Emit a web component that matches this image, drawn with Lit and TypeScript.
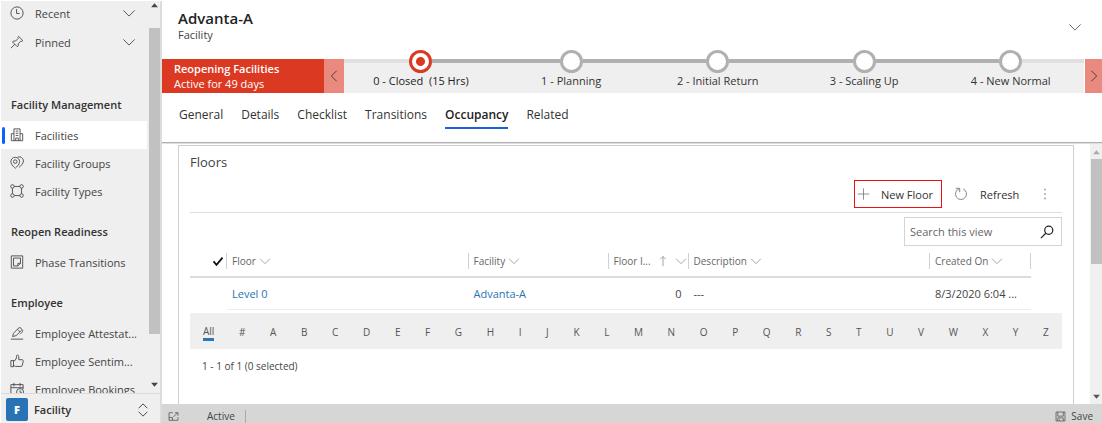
import { LitElement, html, css, svg } from "lit";
import { customElement, property } from "lit/decorators.js";

const glyphs: Record<string, unknown> = {
  recent: svg`<circle cx="8" cy="8" r="7"/><path d="M7.500 3.500v5H11"/>`,
  pin: svg`<path d="M9.800 1.500l4.900 4.900-1.200.9-1.200-.2-2.900 2.900.1 2.300-1.200 1.100L2.900 8l1.100-1.200 2.400.1 2.900-2.900-.3-1.200zM5.500 10.600L1 15"/>`,
  building: svg`<path d="M4.500 14.500V1h7v13.500M4.500 6.500h-3v8h13v-8h-3M6.500 3.500h3M6.500 6h3M6.500 8.500h3M6.500 14.500v-3h3v3"/>`,
  groups: svg`<path d="M6 1.500A4.900 4.900 0 0 0 1 6.400C1 10 6 14 6 14s5-4 5-7.600a4.900 4.900 0 0 0-5-4.900z"/><circle cx="6" cy="6.400" r="2"/><path d="M9 1.200c3.500-1 6.300 1.500 6.300 4.500 0 3.300-3.300 6-4.800 7.200"/>`,
  types: svg`<circle cx="2.800" cy="2.800" r="2"/><circle cx="13.200" cy="2.800" r="2"/><circle cx="2.800" cy="13.200" r="2"/><circle cx="13.200" cy="13.200" r="2"/><path d="M4.800 2.800h6.400M4.800 13.200h6.400M2.800 4.800v6.400M13.200 4.800v6.400"/>`,
  phase: svg`<path d="M1.500 1h13v14h-13zM4 3.500h8v6l-3 3H4zM9 12.500v-3h3"/>`,
  pen: svg`<path d="M1 15h14M3 12l1-3.800L10.300 2c1.200-1 4 1.600 2.900 2.900L7 11zM8.500 3.800l2.900 2.900M14 4.500c1.500 1 .5 2-2.500 5"/>`,
  thumb: svg`<path d="M1 7.500h3v7H1zM4 13l2.200 1.200h6.300c1 0 1.500-.6 1.600-1.300l1-4.700c.2-1-.5-1.700-1.400-1.700H10V3c0-2.300-2.600-2.300-2.600-.5v2L5.500 7.800H4"/>`,
  booking: svg`<path d="M7 14H1V3h14v5M1 6.500h14M4.500 1v4M11.500 1v4M11.500 9.500v2.300h2"/><circle cx="11.500" cy="11.500" r="4"/>`,
  down: svg`<path d="M1.500 5L8 11.500 14.500 5"/>`,
  left: svg`<path d="M11 2L5 8l6 6"/>`,
  right: svg`<path d="M5 2l6 6-6 6"/>`,
  updown: svg`<path d="M3 6l5-5 5 5M3 10l5 5 5-5"/>`,
  plus: svg`<path d="M8 1v14M1 8h14"/>`,
  refresh: svg`<path d="M2 1.500h4.500V6M6 2a6.300 6.300 0 1 0 4.500.2"/>`,
  search: svg`<circle cx="10" cy="6" r="4.600"/><path d="M6.700 9.500L1 15"/>`,
  check: svg`<path d="M2 8.500l4 4.500L14 3.500"/>`,
  arrow: svg`<path d="M8 15V2M4.500 5.500L8 2l3.500 3.500"/>`,
  more: svg`<path class="solid" d="M7.300 2h1.400v1.600H7.300zM7.300 7.200h1.400v1.600H7.300zM7.300 12.400h1.400V14H7.300z"/>`,
  popout: svg`<path d="M7 2.500H1.500v11h13V9M1.500 9.500h5v4M8 8.500l6-6M10 2.500h4.500V7"/>`,
  save: svg`<path d="M1.500 1.500h13v13h-13zM4 1.500v6h8v-6M4 14.500V10h8v4.500M6.500 12v2"/>`,
  triUp: svg`<path class="solid" d="M8 4l6 7H2z"/>`,
  triDown: svg`<path class="solid" d="M8 12l6-7H2z"/>`,
};

@customElement("ui-icon")
class UiIcon extends LitElement {
  @property() name = "";
  static styles = css`
    :host { display: inline-flex; width: 14px; height: 14px; flex: none; }
    svg { width: 100%; height: 100%; fill: none; stroke: currentColor; stroke-width: var(--stroke, 1); }
    .solid { fill: currentColor; stroke: none; }
  `;
  render() {
    return html`<svg viewBox="0 0 16 16" aria-hidden="true">${glyphs[this.name]}</svg>`;
  }
}

@customElement("side-nav")
class SideNav extends LitElement {
  static styles = css`
    :host { display: flex; flex-direction: column; width: 159px; flex: none; background: #efefef; margin: 1px 0 0 1px; border-right: 2px solid #dcdcdc; color: #444; font-size: 11px; }
    .body { flex: 1; min-height: 0; display: flex; }
    .list { flex: 1; min-width: 0; overflow: hidden; }
    .quick { display: grid; gap: 5px; padding-bottom: 24px; }
    button { font: inherit; color: inherit; background: none; border: 0; text-align: left; display: flex; align-items: center; width: 100%; padding: 0 11px 0 9px; height: 24px; }
    button span { flex: 1; padding-left: 11px; }
    h2 { margin: 0; height: 43px; box-sizing: border-box; padding: 19px 0 0 10px; font-size: 11px; line-height: 16px; font-weight: 600; color: #333; }
    a { display: flex; align-items: center; height: 28px; padding: 0 8px 0 9px; color: inherit; text-decoration: none; }
    a span { padding-left: 11px; white-space: nowrap; }
    .on { background: #fff; padding-left: 1px; }
    .on::before { content: ""; width: 3px; height: 17px; border-radius: 2px; background: #0b62ff; margin-right: 5px; }
    .bar { width: 11px; margin-left: 2px; display: flex; flex-direction: column; align-items: center; color: #444; }
    .bar ui-icon { width: 9px; height: 9px; }
    .bar ui-icon:last-child { margin-bottom: 4px; }
    .thumb { width: 100%; height: 306px; margin: 18px 0 auto; background: #c1c1c1; }
    .area { height: 30px; border-top: 1px solid #dadada; padding: 2px 10px 0 5px; font-weight: 600; color: #333; }
    .area b { width: 22px; height: 23px; border-radius: 2px; background: #2873b3; color: #fff; display: grid; place-items: center; }
    .area span { padding-left: 6px; }
  `;
  item(icon: string, text: string, on = false) {
    return html`<a href="#" class=${on ? "on" : ""}><ui-icon name=${icon}></ui-icon><span>${text}</span></a>`;
  }
  render() {
    return html`
      <div class="body">
        <nav class="list">
          <div class="quick">
            <button><ui-icon name="recent"></ui-icon><span>Recent</span><ui-icon name="down"></ui-icon></button>
            <button><ui-icon name="pin"></ui-icon><span>Pinned</span><ui-icon name="down"></ui-icon></button>
          </div>
          <h2>Facility Management</h2>
          ${this.item("building", "Facilities", true)}
          ${this.item("groups", "Facility Groups")}
          ${this.item("types", "Facility Types")}
          <h2>Reopen Readiness</h2>
          ${this.item("phase", "Phase Transitions")}
          <h2>Employee</h2>
          ${this.item("pen", "Employee Attestat...")}
          ${this.item("thumb", "Employee Sentim...")}
          ${this.item("booking", "Employee Bookings")}
        </nav>
        <div class="bar"><ui-icon name="triUp"></ui-icon><div class="thumb"></div><ui-icon name="triDown"></ui-icon></div>
      </div>
      <button class="area"><b>F</b><span>Facility</span><ui-icon name="updown"></ui-icon></button>
    `;
  }
}

@customElement("process-flow")
class ProcessFlow extends LitElement {
  static styles = css`
    :host { display: flex; height: 34px; color: #333; font-size: 11px; }
    .name { width: 162px; box-sizing: border-box; padding: 2px 12px; background: #dc3923; color: #fff; line-height: 15px; }
    .name div { white-space: nowrap; }
    .name b { font-weight: 600; }
    .step { border: 0; padding: 0; width: 20px; background: #ea8a7e; color: #333; display: grid; place-items: center; }
    .next { width: 17px; margin-left: 1px; }
    ol { flex: 1; display: flex; margin: 0; padding: 0; list-style: none; background: #efefef; }
    li { flex: 20; display: flex; flex-direction: column; text-align: center; white-space: pre; line-height: 16px; }
    li:first-child { flex: 21; }
    .rail { display: flex; height: 4px; align-items: center; margin-bottom: 10px; }
    .rail::before, .rail::after { content: ""; flex: 1; height: 4px; background: #b0b0b0; }
    li:first-child .rail::before, li:last-child .rail::after { background: #e0e0e0; }
    .dot { width: 23px; height: 23px; box-sizing: border-box; border: 3px solid #b0b0b0; border-radius: 50%; background: #fff; flex: none; }
    .now .dot { border-color: #dc3923; background: radial-gradient(circle, #dc3923 4px, #fff 5px); }
    .now { font-weight: 500; color: #222; }
  `;
  render() {
    const stages = ["0 - Closed  (15 Hrs)", "1 - Planning", "2 - Initial Return", "3 - Scaling Up", "4 - New Normal"];
    return html`
      <div class="name"><div><b>Reopening Facilities</b></div><div>Active for 49 days</div></div>
      <button class="step" aria-label="Previous stage"><ui-icon name="left"></ui-icon></button>
      <ol>${stages.map((s, i) => html`<li class=${i ? "" : "now"}><span class="rail"><span class="dot"></span></span>${s}</li>`)}</ol>
      <button class="step next" aria-label="Next stage"><ui-icon name="right"></ui-icon></button>
    `;
  }
}

@customElement("floors-grid")
class FloorsGrid extends LitElement {
  static styles = css`
    :host { display: block; border: 1px solid #cfcfcf; border-bottom: 0; padding: 7px 11px 0; color: #444; font-size: 11px; }
    h2 { margin: 0; font-size: 13px; font-weight: 400; line-height: 18px; }
    button { font: inherit; color: inherit; background: none; border: 0; padding: 0; display: flex; align-items: center; }
    .tools { display: flex; justify-content: flex-end; margin-top: 9px; height: 32px; border-bottom: 1px solid #dedede; }
    .tools button { height: 28px; color: #333; }
    .tools ui-icon { color: #777; }
    .new { border: 1px solid #e81010; width: 88px; padding-left: 2px; gap: 11px; }
    .new ui-icon { width: 13px; }
    .refresh { width: 88px; padding-left: 12px; gap: 12px; }
    .more { width: 30px; margin-right: 2px; justify-content: center; }
    form { display: flex; width: 158px; height: 29px; box-sizing: border-box; border: 1px solid #d4d4d4; margin: 4px 0 0 auto; }
    input { flex: 1; min-width: 0; border: 0; padding: 0 0 0 5px; font: inherit; font-size: 11px; background: none; color: inherit; }
    input::placeholder { color: #666; opacity: 1; }
    form button { padding: 0 7px; color: #222; --stroke: 1.400; }
    table { width: calc(100% - 31px); table-layout: fixed; border-collapse: collapse; }
    th { height: 30px; padding: 0; font-weight: 400; font-size: 10px; color: #666; text-align: left; border-bottom: 2px solid #dcdcdc; }
    th div { display: flex; align-items: center; height: 16px; border-right: 1px solid #d0d0d0; padding-left: 5px; gap: 3px; white-space: nowrap; box-sizing: border-box; }
    th ui-icon { width: 12px; height: 12px; color: #888; }
    .pick div { justify-content: flex-end; padding: 0 2px; }
    .pick ui-icon { color: #111; --stroke: 2.400; }
    .clip { flex: 1; }
    .sort div { padding-right: 1px; gap: 6px; }
    td { height: 31px; padding: 0 5px; border-bottom: 1px solid #ececec; white-space: nowrap; }
    td:first-child { border: 0; }
    td.num { text-align: right; padding-right: 7px; }
    a { color: #2b74b0; text-decoration: none; }
    .cPick { width: 37px; } .cFac { width: 140px; } .cNum { width: 80px; } .cDate { width: 101px; }
    .jump { display: flex; justify-content: space-between; align-items: center; height: 36px; margin-top: 3px; padding: 2px 13px 0; box-sizing: border-box; background: #efefef; font-size: 10px; }
    .jump a { color: #555; }
    .jump .all { border-bottom: 3px solid #2e75b6; font-size: 10px; line-height: 14px; }
    .count { margin: 0; padding: 9px 12px; font-size: 10px; line-height: 16px; }
  `;
  render() {
    const down = html`<ui-icon name="down"></ui-icon>`;
    return html`
      <h2>Floors</h2>
      <div class="tools">
        <button class="new"><ui-icon name="plus"></ui-icon>New Floor</button>
        <button class="refresh"><ui-icon name="refresh"></ui-icon>Refresh</button>
        <button class="more" aria-label="More commands"><ui-icon name="more"></ui-icon></button>
      </div>
      <form @submit=${(e: Event) => e.preventDefault()}>
        <input type="search" aria-label="Search this view" placeholder="Search this view" />
        <button aria-label="Search"><ui-icon name="search"></ui-icon></button>
      </form>
      <table>
        <colgroup><col class="cPick" /><col /><col class="cFac" /><col class="cNum" /><col /><col class="cDate" /></colgroup>
        <thead><tr>
          <th class="pick"><div><ui-icon name="check"></ui-icon></div></th>
          <th><div>Floor ${down}</div></th>
          <th><div>Facility ${down}</div></th>
          <th class="sort"><div><span class="clip">Floor I...</span><ui-icon name="arrow"></ui-icon>${down}</div></th>
          <th><div>Description ${down}</div></th>
          <th><div>Created On ${down}</div></th>
        </tr></thead>
        <tbody><tr>
          <td></td>
          <td><a href="#">Level 0</a></td>
          <td><a href="#">Advanta-A</a></td>
          <td class="num">0</td>
          <td>---</td>
          <td>8/3/2020 6:04 ...</td>
        </tr></tbody>
      </table>
      <div class="jump">
        <a href="#" class="all">All</a>
        ${[..."#ABCDEFGHIJKLMNOPQRSTUVWXYZ"].map((c) => html`<a href="#">${c}</a>`)}
      </div>
      <p class="count">1 - 1 of 1 (0 selected)</p>
    `;
  }
}

@customElement("app-root")
class AppRoot extends LitElement {
  static styles = css`
    :host { display: flex; height: 100vh; overflow: hidden; background: #fff; font-family: "Open Sans", "Noto Sans", sans-serif; }
    main { flex: 1; min-width: 0; display: flex; flex-direction: column; }
    header { display: flex; justify-content: space-between; align-items: flex-start; height: 59px; box-sizing: border-box; padding: 8px 20px 0 16px; color: #222; }
    h1 { margin: 0; font-size: 15px; line-height: 20px; font-weight: 600; }
    p { margin: 0; font-size: 11px; line-height: 14px; color: #444; }
    header button { border: 0; background: none; padding: 12px 0 0; color: #555; }
    .tabs { display: flex; gap: 18px; height: 49px; box-sizing: border-box; padding: 12px 17px 0; }
    .tabs a { height: 24px; line-height: 20px; box-sizing: border-box; font-size: 12px; color: #333; text-decoration: none; }
    .tabs .on { font-weight: 600; color: #222; border-bottom: 2px solid #1a5fe0; }
    .form { flex: 1; min-height: 0; display: flex; border-top: 1px solid #b0b0b0; overflow: hidden; box-shadow: inset 0 1px #e0e0e0; }
    .scroll { flex: 1; min-width: 0; padding: 2px 16px 0; overflow: hidden; display: grid; }
    .bar { width: 12px; margin-top: 1px; padding-top: 4px; background: #f0f0f0; display: flex; flex-direction: column; align-items: center; color: #555; }
    .bar ui-icon { width: 9px; height: 9px; }
    .bar .up { color: #aaa; }
    .thumb { width: 11px; height: 105px; margin: 2px 0 auto; background: #c1c1c1; }
    .bar ui-icon:last-child { margin-bottom: 3px; }
    footer { display: flex; align-items: center; height: 19px; padding: 5px 9px 0 6px; box-sizing: border-box; background: #d6d6d6; color: #444; font-size: 10px; }
    footer ui-icon { width: 11px; height: 11px; }
    .state { margin-left: 28px; padding-right: 10px; border-right: 1px solid #aaa; line-height: 13px; }
    footer button { margin-left: auto; display: flex; align-items: center; gap: 5px; font: inherit; color: inherit; border: 0; padding: 0; background: none; }
  `;
  render() {
    const tabs = ["General", "Details", "Checklist", "Transitions", "Occupancy", "Related"];
    return html`
      <side-nav></side-nav>
      <main>
        <header>
          <div><h1>Advanta-A</h1><p>Facility</p></div>
          <button aria-label="Expand header"><ui-icon name="down"></ui-icon></button>
        </header>
        <process-flow></process-flow>
        <nav class="tabs">${tabs.map((t) => html`<a href="#" class=${t === "Occupancy" ? "on" : ""}>${t}</a>`)}</nav>
        <div class="form">
          <div class="scroll"><floors-grid></floors-grid></div>
          <div class="bar"><ui-icon class="up" name="triUp"></ui-icon><div class="thumb"></div><ui-icon name="triDown"></ui-icon></div>
        </div>
        <footer>
          <ui-icon name="popout"></ui-icon><span class="state">Active</span>
          <button><ui-icon name="save"></ui-icon>Save</button>
        </footer>
      </main>
    `;
  }
}
